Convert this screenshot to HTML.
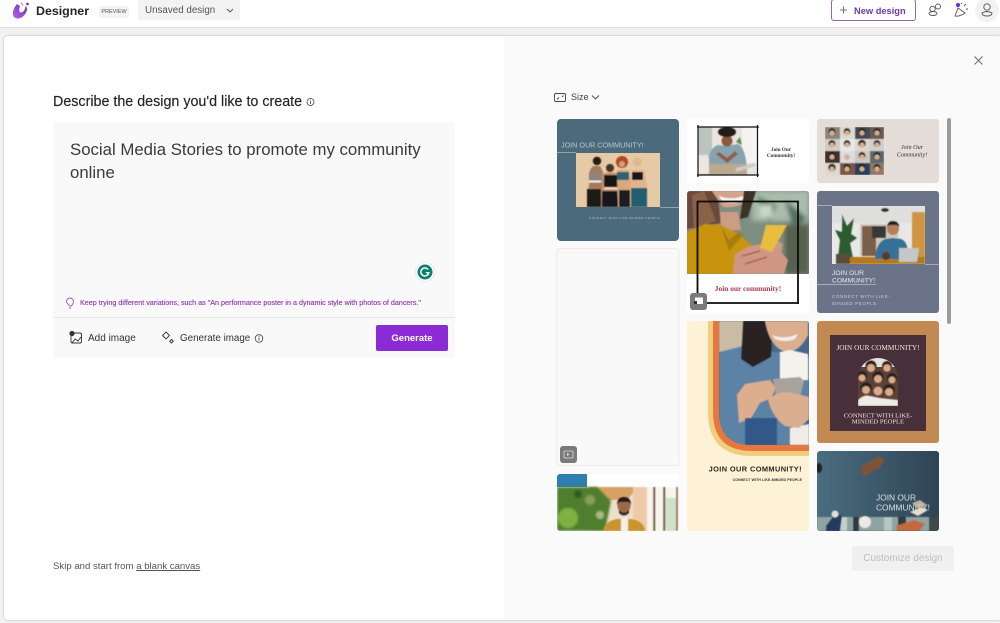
<!DOCTYPE html>
<html lang="en"><head><meta charset="utf-8"><title>Designer</title>
<style>
html,body{margin:0;padding:0;width:1000px;height:623px;overflow:hidden;background:#f1f1f1;font-family:"Liberation Sans",sans-serif;color:#242424}
.a{position:absolute;white-space:nowrap}
svg{position:absolute;left:0;top:0}
</style></head><body>
<div class="a" style="left:0;top:0;width:1000px;height:27px;background:#fff;border-bottom:1px solid #dcdcdc"></div>
<div class="a" style="left:4px;top:36px;width:996px;height:584px;background:#fff;border-radius:4px 0 0 4px;box-shadow:0 0 2px rgba(0,0,0,.25)"></div>
<div class="a" style="left:504px;top:36px;width:496px;height:584px;background:#fafafa"></div>

<div class="a" style="left:36px;top:3px;font-size:12.400px;font-weight:700;line-height:17px">Designer</div>
<div class="a" style="left:99px;top:6px;width:30px;height:12px;background:#f3f3f3;border-radius:2px;font-size:5.500px;line-height:12px;text-align:center;color:#555">PREVIEW</div>
<div class="a" style="left:138px;top:0;width:102px;height:20px;background:#f3f3f3;font-size:9.800px;line-height:21px;color:#555;padding-left:7px;box-sizing:border-box">Unsaved design</div>
<div class="a" style="left:831px;top:-1px;width:85px;height:22px;box-sizing:border-box;border:1px solid #93699f;border-radius:3px;background:#fff;font-size:9.300px;font-weight:700;line-height:22px;color:#6c3aa0;padding-left:22px">New design</div>

<div class="a" style="left:53px;top:94px;font-size:14.300px;line-height:16px;color:#242424;-webkit-text-stroke:.15px #242424">Describe the design you'd like to create</div>

<div class="a" style="left:53px;top:122px;width:402px;height:236px;background:#f9f9f9"></div>
<div class="a" style="left:53px;top:317px;width:402px;height:1px;background:#e6e6e6"></div>
<div class="a" style="left:70px;top:138px;font-size:16.800px;line-height:23px;color:#3b3b3b">Social Media Stories to promote my community<br>online</div>
<div class="a" style="left:80px;top:298px;font-size:7.200px;line-height:10px;color:#8a2db5;-webkit-text-stroke:.1px #8a2db5">Keep trying different variations, such as "An performance poster in a dynamic style with photos of dancers."</div>
<div class="a" style="left:88px;top:332px;font-size:10px;line-height:14px;color:#333">Add image</div>
<div class="a" style="left:180px;top:332px;font-size:9.800px;line-height:14px;color:#333">Generate image</div>
<div class="a" style="left:376px;top:325px;width:72px;height:26px;background:#8c2bd5;border-radius:2px;color:#fff;font-size:9.500px;font-weight:700;line-height:27px;text-align:center">Generate</div>
<div class="a" style="left:53px;top:560px;font-size:9.600px;line-height:14px;color:#555">Skip and start from <span style="text-decoration:underline">a blank canvas</span></div>

<div class="a" style="left:571px;top:91px;font-size:9px;line-height:13px;color:#444">Size</div>
<div class="a" style="left:852px;top:546px;width:102px;height:25px;background:#f0f0f0;border-radius:2px;color:#bdbdbd;font-size:10px;line-height:26px;text-align:center">Customize design</div>

<svg width="1000" height="623" viewBox="0 0 1000 623" font-family="Liberation Sans, sans-serif">
<defs>
<filter id="b" x="-10%" y="-10%" width="120%" height="120%"><feGaussianBlur stdDeviation=".6"/></filter>
<filter id="b1" x="-10%" y="-10%" width="120%" height="120%"><feGaussianBlur stdDeviation="1"/></filter>
<filter id="b2" x="-20%" y="-20%" width="140%" height="140%"><feGaussianBlur stdDeviation="2"/></filter>
<linearGradient id="lg" x1="0" y1="1" x2="1" y2="0"><stop offset="0" stop-color="#b565ec"/><stop offset=".6" stop-color="#8a45d0"/><stop offset="1" stop-color="#4a2a90"/></linearGradient>
<linearGradient id="sea" x1="0" y1="0" x2="1" y2="0"><stop offset="0" stop-color="#4a6d80"/><stop offset="1" stop-color="#2f4454"/></linearGradient>
<clipPath id="c1"><rect x="557" y="119" width="122" height="122" rx="4"/></clipPath>
<clipPath id="c2"><rect x="687" y="191" width="122" height="122" rx="3"/></clipPath>
<clipPath id="c2b"><rect x="687" y="191" width="122" height="83"/></clipPath>
<clipPath id="c3"><rect x="687" y="321" width="122" height="210" rx="3"/></clipPath>
<clipPath id="c3p"><path d="M719 321H809V445H752Q719 445 719 412Z"/></clipPath>
<clipPath id="c4"><rect x="817" y="451" width="122" height="80" rx="3"/></clipPath>
<clipPath id="c5"><rect x="557" y="474" width="122" height="57" rx="3"/></clipPath>
<clipPath id="c6"><rect x="698" y="127" width="59" height="48"/></clipPath>
<clipPath id="c7"><rect x="832" y="206" width="93" height="58"/></clipPath>
<clipPath id="c8"><path d="M858 406V378A20 20 0 0 1 898 378V406Z"/></clipPath>
<clipPath id="c9"><rect x="825" y="127" width="59" height="48"/></clipPath>
<clipPath id="c10"><rect x="576" y="153" width="84" height="54"/></clipPath>
</defs>

<!-- logo -->
<path d="M17 4Q12 10 13 15Q14 19 19 18.500Q25 17 27 10Q27 7 25.500 6Q25 12 21 12.500Q18 12 20 6Z" fill="url(#lg)"/>
<circle cx="27.500" cy="4" r="1.300" fill="#4a3a90"/><path d="M21 2.500l2 3" stroke="#c78aec" stroke-width="1.400"/>
<path d="M227 9l3 3 3-3" fill="none" stroke="#555" stroke-width=".9"/>
<path d="M840 10h7M843.500 6.500v7" stroke="#8a5fae" stroke-width="1.100"/>
<circle cx="987" cy="10" r="12" fill="#f2f2f2"/>
<g fill="none" stroke="#555" stroke-width=".9">
<circle cx="932.500" cy="9" r="2.700"/><ellipse cx="933" cy="13.500" rx="4" ry="2"/><circle cx="938" cy="6.500" r="2.500"/>
<path d="M955 16l3-8 7 5q-6 4-10 3z"/><path d="M964 6l2-2M966 9h2M961 3l1 1"/>
<circle cx="987" cy="7" r="3.200"/><path d="M982 13q5-3 10 0q0 3-5 3t-5-3z"/>
</g>
<circle cx="958" cy="5" r="2" fill="#6b2bc0"/>
<g fill="none" stroke="#444" stroke-width=".8"><circle cx="310.500" cy="102" r="3.500"/><path d="M310.500 101v3M310.500 99.600v.8"/>
<circle cx="259" cy="338.500" r="3.800"/><path d="M259 337.500v3M259 336v.8"/></g>
<path d="M974.500 56.500l8 8M982.500 56.500l-8 8" stroke="#666" stroke-width=".9"/>

<!-- grammarly -->
<circle cx="425" cy="272" r="9.500" fill="#fff" stroke="#e4e4e4" stroke-width=".7"/><circle cx="425" cy="272" r="7.500" fill="#0f7f6f"/>
<path d="M428 269.500a4 4 0 1 0 .8 3.200h-3" fill="none" stroke="#fff" stroke-width="1.400"/>
<!-- input icons -->
<path d="M70 306q-3.500-3-3.500-4.500a3.500 3.500 0 0 1 7 0q0 1.500-2 4.500zM69 308h2" fill="none" stroke="#a74fd8" stroke-width=".9"/>
<g fill="none" stroke="#333" stroke-width=".9"><rect x="71" y="333" width="10.500" height="10" rx="1.500"/><path d="M72 343l3-4 3 2 3-4"/></g>
<circle cx="72" cy="333.500" r="2.600" fill="#333"/>
<path d="M166 332l3.500 3.500-3.500 3.500-3.500-3.500zM171.500 339.500l1.800 1.800-1.800 1.800-1.800-1.800z" fill="none" stroke="#333" stroke-width=".9"/>
<g fill="none" stroke="#444" stroke-width=".9"><rect x="554.500" y="93.500" width="11" height="8" rx="1.500"/><path d="M557 99.500l2-2M563.500 95.500l-1.500 1.500"/><path d="M592 95.500l3.500 3.500 3.500-3.500"/></g>

<!-- card 1 -->
<g clip-path="url(#c1)">
<rect x="557" y="119" width="122" height="122" fill="#4b6a7b"/>
<text x="561" y="147.500" font-size="7.200" fill="#b9c7cc">JOIN OUR COMMUNITY!</text>
<path d="M557 152.500h19M660 207.500h19" stroke="#a9b9c0" stroke-width=".7"/>
<rect x="576" y="153" width="84" height="54" fill="#e6c9a5"/>
<g clip-path="url(#c10)"><g filter="url(#b)">
<!-- woman 1 -->
<path d="M590 170l3-4h7l3 6-1 12 1 23h-16l2-23z" fill="#a57a5c"/><rect x="589" y="172" width="12" height="9" fill="#8e8478"/><rect x="589" y="180.500" width="12" height="2" fill="#eee"/>
<rect x="587" y="189" width="14" height="18" fill="#1d1a19"/><circle cx="597" cy="161" r="4.200" fill="#241a15"/>
<!-- woman 2 -->
<path d="M602 174q8-3 17 0l2 20-2 13h-16l-2-13z" fill="#c28f6c"/><rect x="604" y="175" width="14" height="12" fill="#151418"/>
<rect x="602" y="191" width="18" height="16" fill="#19171a"/><circle cx="610" cy="168" r="4" fill="#4a3122"/><rect x="604" y="187.500" width="14" height="2" fill="#f0d8c0"/>
<!-- woman 3 -->
<path d="M617 170h12l2 10-1 27h-12l-1-27z" fill="#d8a880"/><rect x="617" y="172" width="12" height="8" fill="#2c6372"/><rect x="619" y="190" width="11" height="17" fill="#1d1d20"/><circle cx="622" cy="162" r="6" fill="#aa4a24"/><circle cx="622" cy="164" r="3" fill="#d8a078"/>
<!-- woman 4 -->
<path d="M632 170h12l3 14-1 23h-15l-1-23z" fill="#e0b48e"/><rect x="632" y="172" width="11" height="8" fill="#17181c"/><rect x="631" y="188" width="16" height="19" fill="#235e6e"/><circle cx="637.500" cy="162" r="4.500" fill="#dcbc8e"/>
</g></g>
<text x="589" y="219" font-size="2.900" fill="#b8c6cc" letter-spacing=".55">CONNECT WITH LIKE-MINDED PEOPLE</text>
</g>

<!-- blank card -->
<rect x="557" y="248.500" width="122" height="217" rx="3" fill="#f9f9f9" stroke="#ececec"/>
<rect x="560" y="446" width="17" height="17" rx="3" fill="#7a7a7a"/><rect x="564" y="451" width="9" height="7" rx="1" fill="none" stroke="#ddd" stroke-width=".8"/><path d="M567 453v3l2.500-1.500z" fill="#ddd"/>

<!-- card low-left -->
<g clip-path="url(#c5)">
<rect x="557" y="474" width="122" height="57" fill="#fff"/>
<rect x="557" y="474" width="30" height="13" fill="#2e7fb0"/>
<g filter="url(#b)">
<rect x="590" y="487" width="50" height="44" fill="#ece0cc"/>
<path d="M590 487h48l-10 12-26 2z" fill="#d8a262"/>
<rect x="633" y="487" width="14" height="44" fill="#efcaa8"/>
<rect x="647" y="487" width="32" height="44" fill="#f6f5ee"/>
<rect x="653" y="487" width="2.500" height="44" fill="#8b6a50"/><rect x="663" y="487" width="2.500" height="44" fill="#8b6a50"/><rect x="676" y="487" width="2" height="44" fill="#9a7a60"/>
<rect x="666" y="498" width="10" height="33" fill="#cfe2c8"/>
</g>
<g filter="url(#b1)"><path d="M557 487h40l14 14-6 30h-48z" fill="#4f7f2e"/><circle cx="568" cy="518" r="10" fill="#7fb240"/><circle cx="590" cy="500" r="5" fill="#8a9f58"/><circle cx="600" cy="515" r="4" fill="#a8bb80"/><circle cx="578" cy="494" r="4" fill="#2f5a22"/></g>
<g filter="url(#b)"><path d="M603 531q2-10 14-12h14q13 2 14 12z" fill="#c9952f"/><rect x="621" y="518" width="7" height="13" fill="#f4efe6"/><circle cx="624" cy="506" r="6.500" fill="#9a6a48"/><path d="M617 505q0-8 7-8t7 8l-2-3h-10z" fill="#2a1f1a"/><path d="M619 510q5 5 10 0v3q-5 5-10 0z" fill="#3a2a22"/></g>
</g>

<!-- col 2 top -->
<rect x="687" y="119" width="122" height="64" rx="3" fill="#fff"/>
<g clip-path="url(#c6)">
<rect x="698" y="127" width="59" height="48" fill="#e8e4de"/>
<g filter="url(#b)">
<rect x="698" y="127" width="14" height="28" fill="#bcc4be"/><rect x="742" y="127" width="15" height="36" fill="#f5f3f1"/>
<path d="M707 170q0-21 11-25l9 1 11-2q8 4 9 26z" fill="#86a3ae"/>
<circle cx="727" cy="141" r="5.500" fill="#8a5a40"/><ellipse cx="727" cy="132" rx="9" ry="5" fill="#241a15"/>
<path d="M719 152l8 6 8-7 3 3-11 9-11-9z" fill="#915f46"/><path d="M736 142l4-5 2 8z" fill="#5a8a50"/>
<rect x="700" y="164" width="47" height="11" fill="#bba98d"/><rect x="699" y="158" width="10" height="16" fill="#ece8e0"/><path d="M736 168l19-5v3l-19 6z" fill="#ccc"/>
</g>
</g>
<path d="M697 127H759M697 175H759M698 125V177M757.500 125V177" stroke="#111" stroke-width="1.200" fill="none"/>
<g font-family="Liberation Serif, serif" font-weight="700" font-size="5.200" fill="#333" text-anchor="middle"><text x="781" y="151">Join Our</text><text x="781" y="157">Community!</text></g>

<!-- col 2 second -->
<g clip-path="url(#c2)">
<rect x="687" y="191" width="122" height="122" fill="#fff"/>
<g clip-path="url(#c2b)">
<rect x="687" y="191" width="122" height="83" fill="#7d8f80"/>
<g filter="url(#b2)"><rect x="752" y="191" width="57" height="30" fill="#a9bcae"/><rect x="785" y="225" width="24" height="49" fill="#59604f"/><path d="M755 195l22 10-8 16z" fill="#5d8550"/><path d="M785 200l22 18-14 10z" fill="#54705c"/><rect x="760" y="205" width="12" height="12" fill="#ccd6c8"/></g>
<g filter="url(#b)">
<path d="M687 191h30l4 32-34 6z" fill="#6a4a3a"/>
<path d="M692 195l12-4 12 30-22 8z" fill="#8a6248"/>
<path d="M712 191h40l-3 8q-10 10-26 8z" fill="#d2a48c"/>
<path d="M720 212h18l3 18h-20z" fill="#cc9c84"/>
<path d="M719 196q14 5 26-1l-3 6q-11 4-20 0z" fill="#f7f4f0"/>
<path d="M744 191h12l-8 26-8 2z" fill="#3c3228"/>
<path d="M687 232l18-8 16 1 16 8 22 18-5 23h-67z" fill="#c8930e"/>
<path d="M721 226l8 14 10-8 4 3-14 16z" fill="#a87c08"/>
<path d="M733 274l2-20 14-8 12-2 14-4 8 4-2 8 7 8-4 14z" fill="#cf9684"/>
<path d="M766 225h21l-15 27-12-4z" fill="#e9bd3c"/>
<path d="M742 256l18-5M745 264l22-7" stroke="#a4544e" stroke-width="1.200"/>
</g>
</g>
<text x="748" y="291" text-anchor="middle" font-family="Liberation Serif, serif" font-size="7.400" font-weight="700" fill="#a93a50">Join our community!</text>
</g>
<path d="M697 201.500H799M697 303H799M697.500 201V304M798 201V304" fill="none" stroke="#0c0c0c" stroke-width="1.800"/>
<rect x="690" y="293" width="17" height="17" rx="3" fill="#7a7a7a"/><rect x="695" y="297.500" width="8" height="6.500" fill="#fff"/><rect x="694" y="301" width="3" height="3" fill="#333"/>

<!-- col 2 tall -->
<g clip-path="url(#c3)">
<rect x="687" y="321" width="122" height="210" fill="#fdf2d6"/>
<path d="M708 321V412Q708 456 752 456H809V321Z" fill="#efcf7d"/>
<path d="M713 321V412Q713 451 752 451H809V321Z" fill="#e7773f"/>
<g clip-path="url(#c3p)">
<rect x="719" y="321" width="90" height="124" fill="#46688c"/>
<g filter="url(#b)">
<rect x="719" y="321" width="26" height="36" fill="#c9bba6"/>
<path d="M719 352l24-6 30 6 20 0 16 6v60l-20 27h-70z" fill="#5b82a6"/>
<path d="M743 321h30l-2 36-18 10-12-8z" fill="#2a2320"/>
<path d="M765 321h43v14q-8 17-22 17-16-4-21-31z" fill="#dcae90"/>
<path d="M772 335q12 5 26-1l-3 5q-10 4-20 0z" fill="#f4ece6"/>
<path d="M780 352l10-2 18 4v26h-28z" fill="#f5f2ee"/>
<path d="M790 428l19-4v21h-19z" fill="#f0ece8"/>
<path d="M737 395l8-11 25-4 6 8-5 10-11 5-9 15-12 5z" fill="#dcae8e"/>
<path d="M773 379l27-2 4 4-4 16-24-2z" fill="#a9a39c"/>
<path d="M768 400q10-10 24-7l17 4v22l-10 9-14-2q-12-8-17-26z" fill="#dcae90"/>
<rect x="745" y="418" width="32" height="27" fill="#33598a"/>
</g>
</g>
<text x="802" y="471.500" text-anchor="end" font-size="7.400" font-weight="700" fill="#2a2420" letter-spacing=".4">JOIN OUR COMMUNITY!</text>
<text x="802" y="481" text-anchor="end" font-size="3.500" font-weight="700" fill="#333" letter-spacing=".1">CONNECT WITH LIKE-MINDED PEOPLE</text>
</g>

<!-- col 3 first -->
<rect x="817" y="119" width="122" height="64" rx="3" fill="#e4dcd6"/>
<g clip-path="url(#c9)"><g filter="url(#b)">
<rect x="825" y="127" width="59" height="48" fill="#e8e4df"/>
<rect x="825" y="127" width="15" height="12" fill="#8d8478"/><rect x="840" y="127" width="15" height="12" fill="#dcd8d2"/><rect x="855" y="127" width="15" height="12" fill="#3f4a55"/><rect x="870" y="127" width="14" height="12" fill="#6a5a50"/>
<rect x="825" y="139" width="15" height="12" fill="#d0ccc4"/><rect x="840" y="139" width="15" height="12" fill="#e8e8e8"/><rect x="855" y="139" width="15" height="12" fill="#e0d6cc"/><rect x="870" y="139" width="14" height="12" fill="#cfcfcf"/>
<rect x="825" y="151" width="15" height="12" fill="#3f3028"/><rect x="840" y="151" width="15" height="12" fill="#dcdcdc"/><rect x="855" y="151" width="15" height="12" fill="#cfc8c0"/><rect x="870" y="151" width="14" height="12" fill="#5a6a70"/>
<rect x="825" y="163" width="15" height="12" fill="#ddd8d0"/><rect x="840" y="163" width="15" height="12" fill="#7a5848"/><rect x="855" y="163" width="15" height="12" fill="#27415e"/><rect x="870" y="163" width="14" height="12" fill="#8d7a6a"/>
<g fill="#2a201c"><circle cx="832" cy="131.500" r="3.400"/><circle cx="847" cy="131.500" r="3.400"/><circle cx="862" cy="131.500" r="3.400"/><circle cx="877" cy="131.500" r="3.400"/><circle cx="832" cy="143.500" r="3.400"/><circle cx="847" cy="143.500" r="3.400"/><circle cx="862" cy="143.500" r="3.800"/><circle cx="877" cy="143.500" r="3.400"/><circle cx="832" cy="155.500" r="3.400"/><circle cx="862" cy="155.500" r="3.400"/><circle cx="877" cy="155.500" r="3.400"/><circle cx="832" cy="167.500" r="3.800"/><circle cx="847" cy="167.500" r="3.400"/><circle cx="862" cy="167.500" r="3.400"/><circle cx="877" cy="167.500" r="3.400"/></g>
<g fill="#d9ae90"><circle cx="832" cy="133" r="2.500"/><circle cx="847" cy="133" r="2.500"/><circle cx="862" cy="133" r="2.500"/><circle cx="877" cy="133" r="2.500"/><circle cx="832" cy="145" r="2.500"/><circle cx="847" cy="145" r="2.500"/><circle cx="862" cy="145" r="2.500"/><circle cx="877" cy="145" r="2.500"/><circle cx="832" cy="157" r="2.500"/><circle cx="847" cy="157" r="2.800"/><circle cx="862" cy="157" r="2.500"/><circle cx="877" cy="157" r="2.500"/><circle cx="832" cy="169" r="2.500"/><circle cx="847" cy="169" r="2.500"/><circle cx="862" cy="169" r="2.500"/><circle cx="877" cy="169" r="2.500"/></g>
</g></g>
<g font-family="Liberation Serif, serif" font-style="italic" font-size="6.200" fill="#333" text-anchor="middle"><text x="912" y="149">Join Our</text><text x="912" y="156.500">Community!</text></g>

<!-- col 3 second -->
<rect x="817" y="191" width="122" height="122" rx="3" fill="#6b7388"/>
<path d="M817 205.500h15M925 264.500h14M817 284.500h59" stroke="#b9bfcb" stroke-width=".7"/>
<g clip-path="url(#c7)">
<rect x="832" y="206" width="93" height="58" fill="#e8e8e6"/>
<g filter="url(#b)">
<rect x="832" y="206" width="93" height="17" fill="#dededc"/>
<rect x="860" y="224" width="38" height="32" fill="#cfc8bc"/>
<rect x="862" y="226" width="14" height="30" fill="#7c5e48"/><rect x="872" y="226" width="14" height="12" fill="#37383a"/>
<rect x="912" y="212" width="13" height="52" fill="#cf9540"/>
<ellipse cx="885" cy="210" rx="4" ry="2" fill="#333"/>
<path d="M838 258l2-18-5-10 7 2 0-18 5 12 7-8-3 16 6 4-7 5 3 15z" fill="#2e5a30"/>
<rect x="836" y="254" width="14" height="10" fill="#5a4b3b"/>
<rect x="850" y="257" width="75" height="7" fill="#b4791e"/>
<path d="M875 259q1-16 10-20l8-1 8 1q8 3 7 20z" fill="#356f96"/>
<circle cx="893" cy="229" r="6" fill="#b57f5f"/><path d="M887 227q1-7 6-6 6 0 6 6l-2-2h-8z" fill="#23201e"/>
<path d="M899 248h20l-2 14h-18z" fill="#c4c8c8"/>
<circle cx="886" cy="256" r="4" fill="#5a3a2a"/>
</g>
</g>
<g font-size="6.700" fill="#e6e8ee"><text x="832" y="275">JOIN OUR</text><text x="832" y="282.500">COMMUNITY!</text></g>
<g font-size="4.600" fill="#c5cad6" letter-spacing=".55"><text x="832" y="298">CONNECT WITH LIKE-</text><text x="832" y="305">MINDED PEOPLE</text></g>

<!-- col 3 third -->
<rect x="817" y="321" width="122" height="122" rx="3" fill="#c28a52"/>
<rect x="830" y="335" width="96" height="96" fill="#48303a"/>
<g font-family="Liberation Serif, serif" fill="#eee4d8" text-anchor="middle">
<text x="878" y="350" font-size="7.300">JOIN OUR COMMUNITY!</text>
<text x="878" y="417.500" font-size="6.600">CONNECT WITH LIKE-</text><text x="878" y="423.500" font-size="6.600">MINDED PEOPLE</text></g>
<g clip-path="url(#c8)">
<rect x="858" y="358" width="40" height="48" fill="#5a4238"/>
<rect x="860" y="358" width="36" height="9" fill="#e8e4e0"/>
<g filter="url(#b)">
<path d="M858 400q6-6 12-4l10 2 18 2v6h-40z" fill="#efeae4"/>
<g fill="#2a1e1a"><circle cx="871" cy="366" r="5.500"/><circle cx="887" cy="366" r="5"/><circle cx="862" cy="376" r="5"/><circle cx="878" cy="377" r="5.500"/><circle cx="892" cy="378" r="5"/><circle cx="866" cy="388" r="5.500"/><circle cx="889" cy="390" r="5.500"/></g>
<g fill="#dcaa88"><circle cx="871" cy="368" r="4"/><circle cx="887" cy="368" r="3.800"/><circle cx="862" cy="378" r="3.500"/><circle cx="878" cy="379" r="4"/><circle cx="892" cy="380" r="3.500"/><circle cx="866" cy="390" r="4"/><circle cx="878" cy="391" r="4.500"/><circle cx="889" cy="392" r="4"/></g>
</g>
</g>

<!-- col 3 fourth -->
<g clip-path="url(#c4)">
<rect x="817" y="451" width="122" height="80" fill="url(#sea)"/>
<g filter="url(#b)">
<path d="M861 467l10-6 8-5 5 4-4 8-8 3-7 5-4-3z" fill="#7f5238"/>
<ellipse cx="819" cy="468" rx="3" ry="5" fill="#222"/>
<path d="M817 517h122v14H817z" fill="#8fa3a2"/>
<rect x="840" y="517" width="7" height="14" fill="#c2d0cc"/><rect x="853" y="517" width="6" height="14" fill="#2d3a44"/><rect x="884" y="517" width="8" height="14" fill="#b4c6c2"/><rect x="898" y="517" width="8" height="14" fill="#2d3a44"/><rect x="929" y="517" width="10" height="14" fill="#3e4a4c"/>
<circle cx="865" cy="522" r="6" fill="#eceae2"/><path d="M826 526l9-12 7 2-2 15h-14z" fill="#233a5e"/><circle cx="835" cy="514" r="3.500" fill="#e2dfd6"/>
<path d="M896 526l18-6 11 4-6 7h-22z" fill="#c26a3c"/>
<path d="M910 512l12-5 6 3-10 6z" fill="#e4ddd0"/>
</g>
<g font-size="8.400" fill="#d8e0e0"><text x="876" y="500.500">JOIN OUR</text><text x="876" y="510.500">COMMUNITY!</text></g>
<path d="M912 503l8-3 7 5-9 4z" fill="#d6c3ab" opacity=".85" filter="url(#b)"/>
</g>

<!-- scrollbar -->
<rect x="947" y="118" width="4" height="206" rx="2" fill="#9c9c9c"/>
</svg>
</body></html>
